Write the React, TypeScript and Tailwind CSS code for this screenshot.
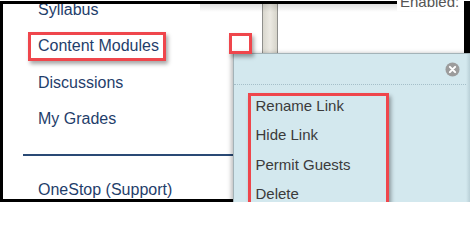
import React from "react";

const navFont = { fontFamily: '"Liberation Sans", Arial, sans-serif' };

export default function App() {
  const items = ["Syllabus", "Content Modules", "Discussions", "My Grades"];
  const menu = ["Rename Link", "Hide Link", "Permit Guests", "Delete"];
  return (
    <div className="relative w-[470px] h-[202px] overflow-hidden bg-white" style={navFont}>
      <div className="flex h-full pt-[1px]">
        <div className="flex flex-1 h-full border-l-[3px] border-t-[3px] border-b-[3px] border-r-[6px] border-black overflow-hidden">
          {/* nav column */}
          <div className="w-[259px] shrink-0 flex flex-col mt-[-12.5px]">
            {items.map((t) => (
              <div key={t} className="shrink-0 h-[36.5px] leading-[36.5px] pl-[35px] text-[16px] text-[#1f3e6b] whitespace-nowrap">
                {t}
              </div>
            ))}
            <div className="shrink-0 mt-[16.5px] ml-[20px] mr-[8px] h-[2px] bg-[#2a4a75]" />
            <div className="shrink-0 mt-[16px] h-[36px] leading-[36px] pl-[35px] text-[16px] text-[#1f3e6b] whitespace-nowrap">
              OneStop (Support)
            </div>
          </div>
          {/* scrollbar */}
          <div className="w-[16px] shrink-0 h-full border-x-[1.5px] border-[#8f8f8c] bg-gradient-to-r from-[#d9d7ce] via-[#eceae3] to-[#d6d4ca]" />
          {/* right area */}
          <div className="flex-1 h-full bg-white" />
        </div>
      </div>

      {/* top shadow under border */}
      <div className="pointer-events-none absolute left-[200px] right-[6px] top-[4px] h-[8px] bg-gradient-to-b from-[rgba(0,0,0,0.12)] to-transparent" />

      {/* Enabled: text partially scrolled out */}
      <div className="absolute left-[397px] top-0 w-[67px] h-[11px] bg-white overflow-hidden">
        <div className="absolute left-[3px] top-[-7px] text-[15px] leading-[17px] text-[#555]">Enabled:</div>
      </div>

      {/* popup menu */}
      <div className="absolute left-[233px] top-[53px] right-0 bottom-0 bg-[#d3e8ee] border-l border-t border-[#a3b3b8] shadow-[-2px_0_4px_rgba(0,0,0,0.25)] flex flex-col overflow-hidden">
        <div className="absolute right-0 top-0 bottom-0 w-[4px] bg-gradient-to-r from-[#d3e8ee] to-[#b9d0d7]" />
        <div className="shrink-0 h-[31px] flex items-center justify-end pr-[6px] border-b border-dotted border-[#a5bfc9] mr-[4px]">
          <svg width="15" height="15" viewBox="0 0 16 16">
            <circle cx="8" cy="8" r="7.5" fill="#9c9c9c" />
            <path d="M5.2 5.2 L10.8 10.8 M10.8 5.2 L5.2 10.8" stroke="#fff" strokeWidth="2.2" strokeLinecap="round" />
          </svg>
        </div>
        <div className="shrink-0 flex flex-col pt-[6px] pl-[21.5px]">
          {menu.map((m) => (
            <div key={m} className="shrink-0 h-[29.3px] leading-[29.3px] text-[15px] text-[#3b3b3b] whitespace-nowrap">
              {m}
            </div>
          ))}
        </div>
      </div>

      {/* annotation boxes */}
      <div className="absolute left-[28px] top-[32px] w-[138px] h-[29px] border-[3px] border-[#ef464c] shadow-[2px_3px_4px_rgba(0,0,0,0.35)]" />
      <div className="absolute left-[229px] top-[33px] w-[23px] h-[21px] border-[3px] border-[#ef464c] shadow-[2px_3px_4px_rgba(0,0,0,0.35)]" />
      <div className="absolute left-[248px] top-[93px] w-[141px] h-[120px] border-[3px] border-[#ef464c] shadow-[2px_3px_4px_rgba(0,0,0,0.35)]" />
    </div>
  );
}
